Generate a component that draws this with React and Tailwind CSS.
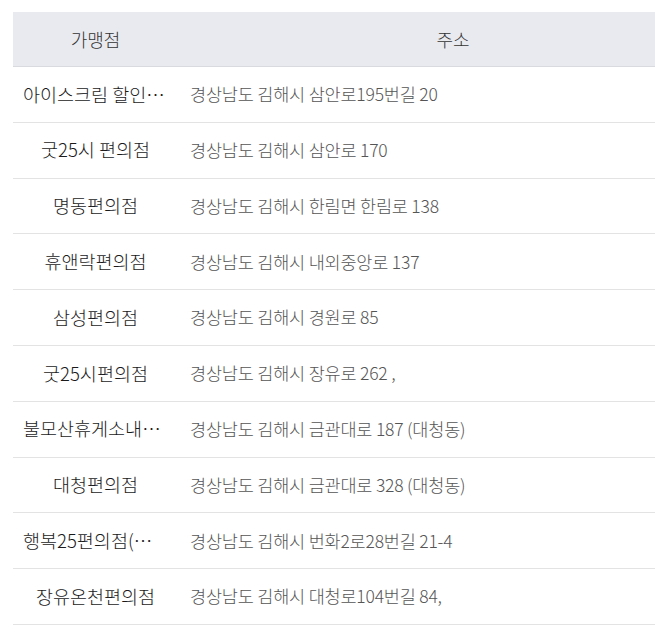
const stores = [
  { name: '아이스크림 할인점 김해삼안점', addr: '경상남도 김해시 삼안로195번길 20' },
  { name: '굿25시 편의점', addr: '경상남도 김해시 삼안로 170' },
  { name: '명동편의점', addr: '경상남도 김해시 한림면 한림로 138' },
  { name: '휴앤락편의점', addr: '경상남도 김해시 내외중앙로 137' },
  { name: '삼성편의점', addr: '경상남도 김해시 경원로 85' },
  { name: '굿25시편의점', addr: '경상남도 김해시 장유로 262 ,' },
  { name: '불모산휴게소내편의점', addr: '경상남도 김해시 금관대로 187 (대청동)' },
  { name: '대청편의점', addr: '경상남도 김해시 금관대로 328 (대청동)' },
  { name: '행복25편의점(김해점)', addr: '경상남도 김해시 번화2로28번길 21-4' },
  { name: '장유온천편의점', addr: '경상남도 김해시 대청로104번길 84,' }
];

export default function App() {
  return (
    <div className="h-[638px] w-[655px] overflow-hidden bg-white pl-[13px] pt-[12px] font-['Noto_Sans_CJK_KR','Noto_Sans',sans-serif]">
      <div className="w-[715px]">
        <div className="grid h-[55px] grid-cols-[165px_1fr] items-center border-b border-[#d9dadf] bg-[#e9eaef] text-[18px] font-light text-[#333]">
          <div className="text-center">가맹점</div>
          <div className="text-center">주소</div>
        </div>
        {stores.map((s) => (
          <div key={s.name} className="grid h-[55.8px] grid-cols-[165px_1fr] items-center border-b border-[#e3e3e3]">
            <div className="truncate px-[10px] text-center text-[18.5px] font-light text-[#1a1a1a]">{s.name}</div>
            <div className="truncate px-3 text-[17.5px] font-light tracking-[-0.2px] text-[#555]">{s.addr}</div>
          </div>
        ))}
      </div>
    </div>
  );
}
